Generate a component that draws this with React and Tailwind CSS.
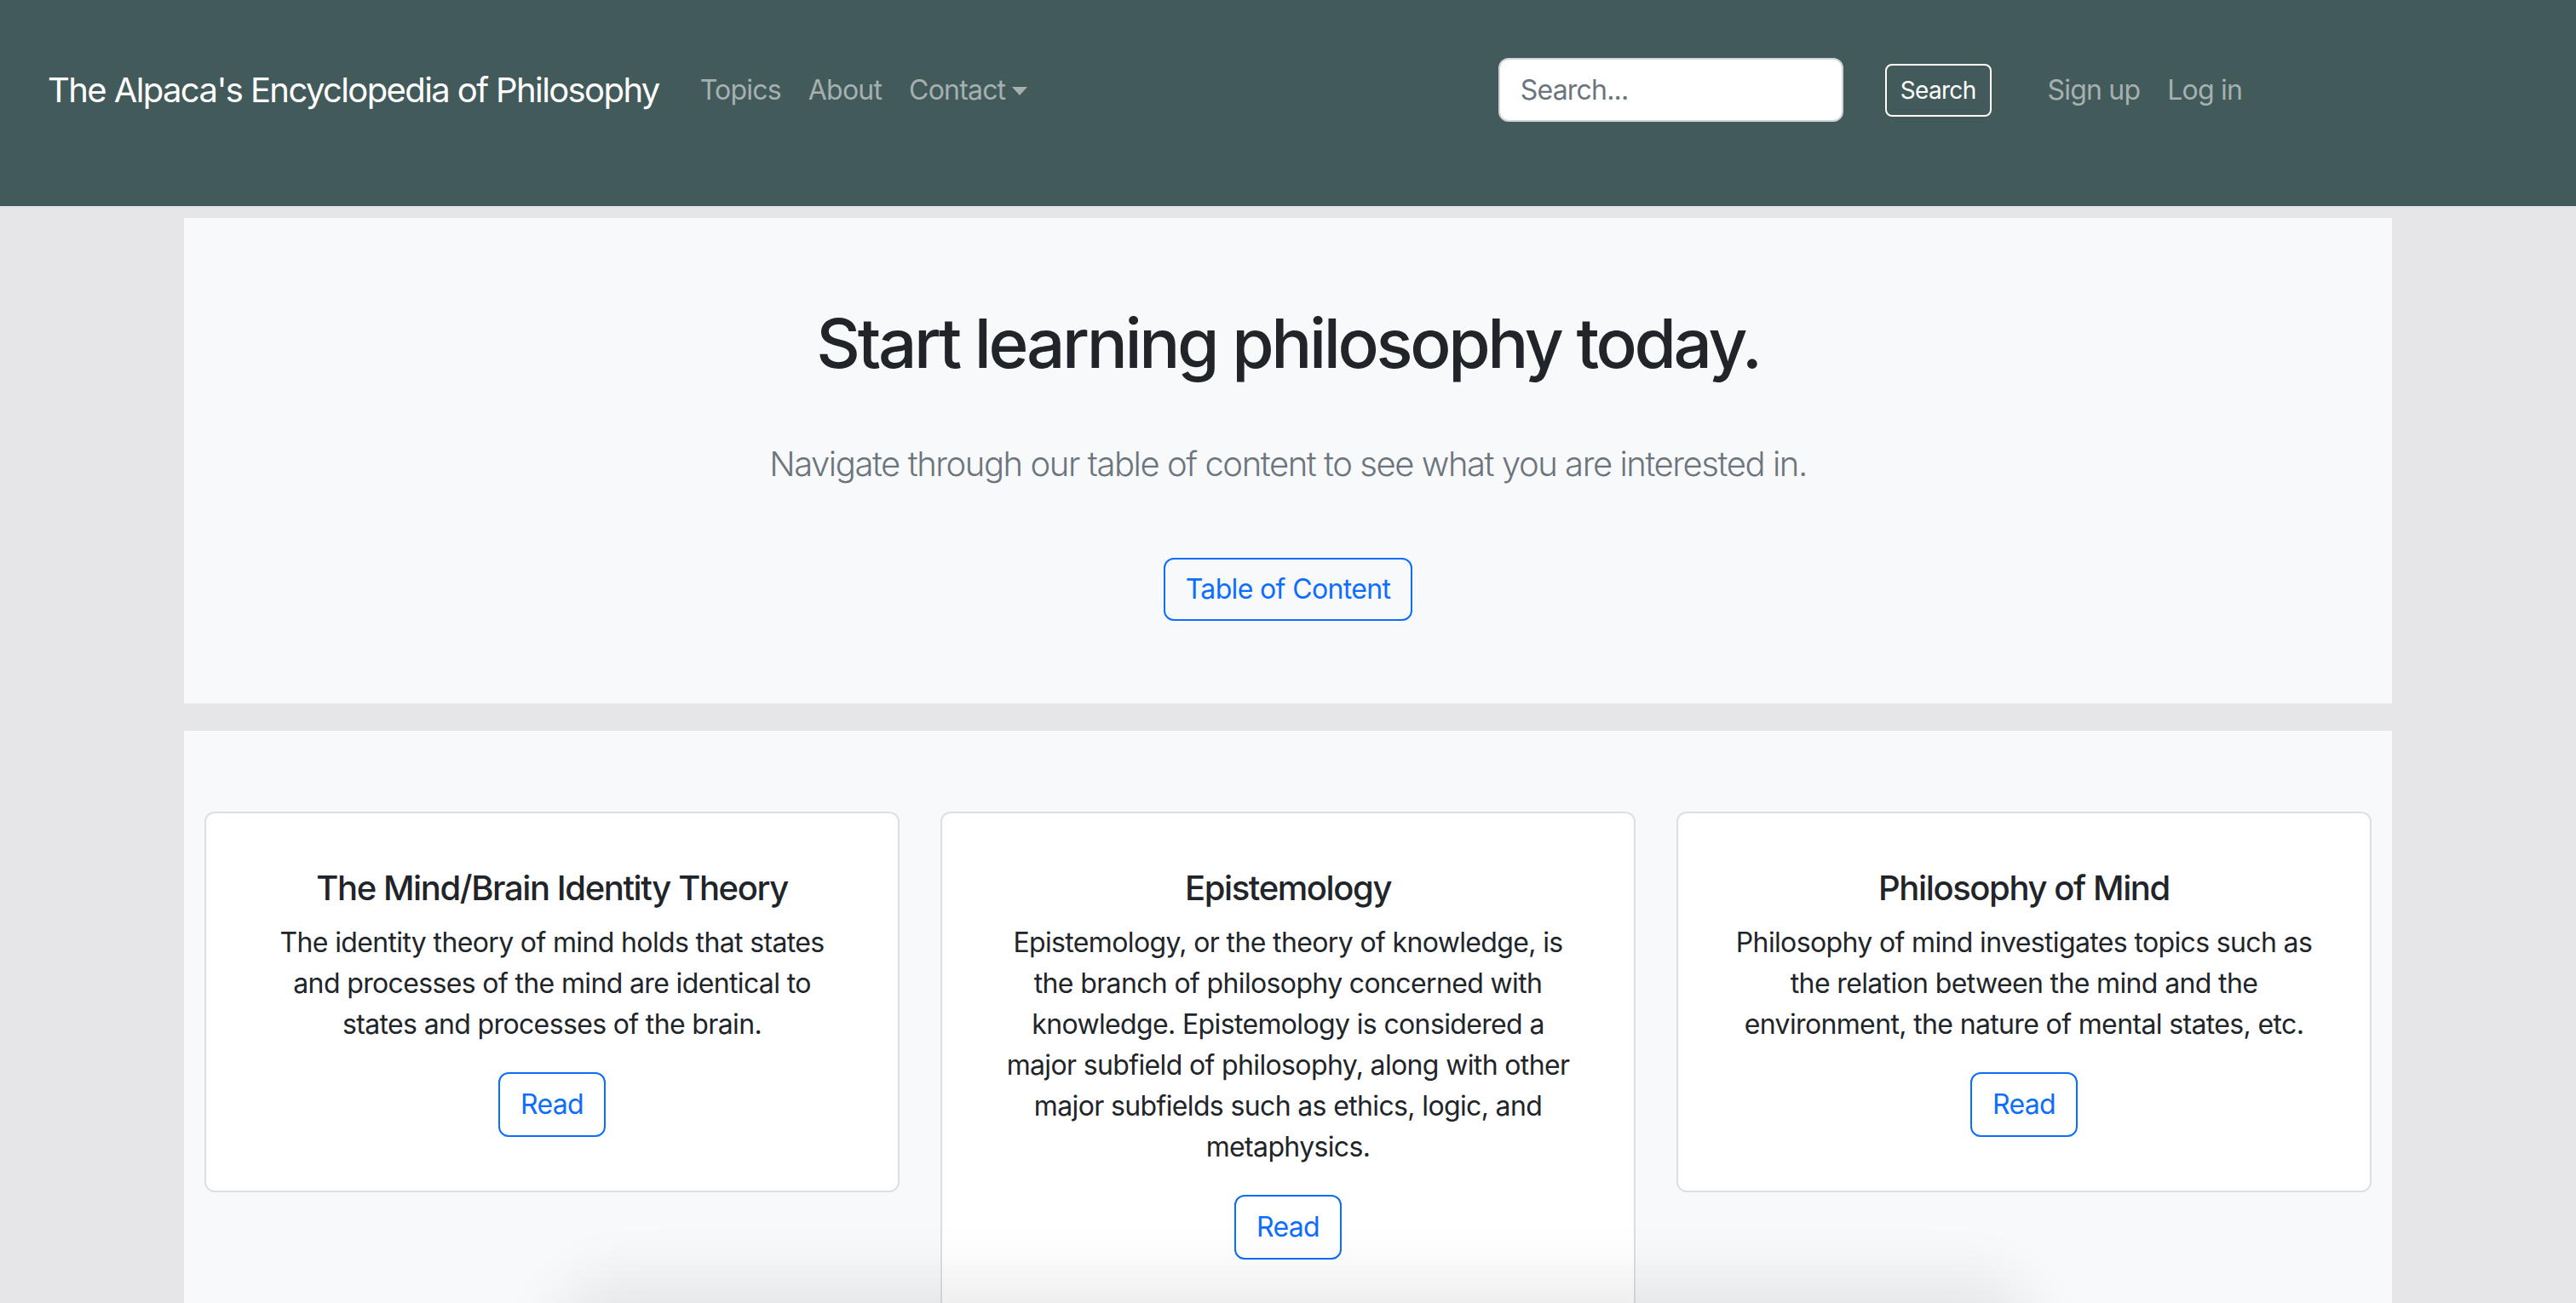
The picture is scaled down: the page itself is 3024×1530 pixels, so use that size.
import { useState } from "react";

const cards = [
  {
    title: "The Mind/Brain Identity Theory",
    text: "The identity theory of mind holds that states and processes of the mind are identical to states and processes of the brain.",
  },
  {
    title: "Epistemology",
    text: "Epistemology, or the theory of knowledge, is the branch of philosophy concerned with knowledge. Epistemology is considered a major subfield of philosophy, along with other major subfields such as ethics, logic, and metaphysics.",
  },
  {
    title: "Philosophy of Mind",
    text: "Philosophy of mind investigates topics such as the relation between the mind and the environment, the nature of mental states, etc.",
  },
];

const Navbar = () => {
  const [query, setQuery] = useState("");

  return (
    <nav className="h-[242px] bg-[#435a5b] pt-[68px]">
      <div className="flex h-[75px] items-center">
        <a className="ml-[56px] text-[40px] leading-[60px] tracking-[-0.04em] text-white">
          The Alpaca's Encyclopedia of Philosophy
        </a>
        <ul className="ml-[32px] flex items-center text-[32px] tracking-[-0.025em] text-[#a5b0b1]">
          <li className="px-[16px]">Topics</li>
          <li className="px-[16px]">About</li>
          <li className="flex items-center px-[16px]">
            Contact
            <span className="ml-[8px] mt-[2px] h-0 w-0 border-x-[9px] border-t-[10px] border-x-transparent border-t-[#a5b0b1]" />
          </li>
        </ul>

        <div className="ml-auto mr-[376px] flex items-center">
          <input
            value={query}
            onChange={(event) => setQuery(event.target.value)}
            placeholder="Search..."
            className="h-[75px] w-[405px] rounded-[12px] border-2 border-[#ced4da] bg-white px-[24px] text-[32px] tracking-[-0.025em] text-[#212529] outline-none placeholder:text-[#6c757d]"
          />
          <button
            type="button"
            className="ml-[49px] h-[62px] rounded-[8px] border-2 border-white px-[16px] text-[28px] tracking-[-0.025em] text-white"
          >
            Search
          </button>
          <ul className="ml-[50px] flex text-[32px] tracking-[-0.025em] text-[#a5b0b1]">
            <li className="px-[16px]">Sign up</li>
            <li className="px-[16px]">Log in</li>
          </ul>
        </div>
      </div>
    </nav>
  );
};

const Card = ({ title, text }) => (
  <div className="rounded-[12px] border-2 border-[#dfdfdf] bg-white px-[64px] pb-[63px] pt-[64px] text-center">
    <h5 className="mb-[16px] text-[40px] font-medium leading-[48px] tracking-[-0.035em] text-[#212529]">
      {title}
    </h5>
    <p className="mb-[32px] text-[32px] leading-[48px] tracking-[-0.02em] text-[#212529]">{text}</p>
    <button
      type="button"
      className="h-[76px] rounded-[12px] border-2 border-[#0d6efd] px-[24px] text-[32px] tracking-[-0.02em] text-[#0d6efd]"
    >
      Read
    </button>
  </div>
);

export default function App() {
  return (
    <div className="relative h-[1530px] overflow-hidden bg-[#e6e6e8] font-['Inter','Liberation_Sans',sans-serif]">
      <Navbar />

      <div className="mx-auto w-[2592px]">
        <section className="mt-[14px] bg-[#f8f9fa] px-[96px] pb-[97px] pt-[99px] text-center">
          <h1 className="text-[80px] font-medium leading-[96px] tracking-[-0.042em] text-[#212529]">
            Start learning philosophy today.
          </h1>
          <p className="mt-[64px] text-[40px] font-light leading-[60px] tracking-[-0.036em] text-[#6c757d]">
            Navigate through our table of content to see what you are interested in.
          </p>
          <button
            type="button"
            className="mt-[80px] h-[74px] rounded-[12px] border-2 border-[#0d6efd] px-[24px] text-[32px] tracking-[-0.02em] text-[#0d6efd]"
          >
            Table of Content
          </button>
        </section>

        <section className="mt-[32px] grid grid-cols-3 items-start gap-[48px] bg-[#f8f9fa] px-[24px] pt-[95px]">
          {cards.map((card) => (
            <Card key={card.title} title={card.title} text={card.text} />
          ))}
        </section>
      </div>

      <div className="absolute bottom-[-90px] left-[680px] h-[90px] w-[1680px] rounded-full shadow-[0_0_70px_30px_rgba(0,0,0,0.08)]" />
    </div>
  );
}
